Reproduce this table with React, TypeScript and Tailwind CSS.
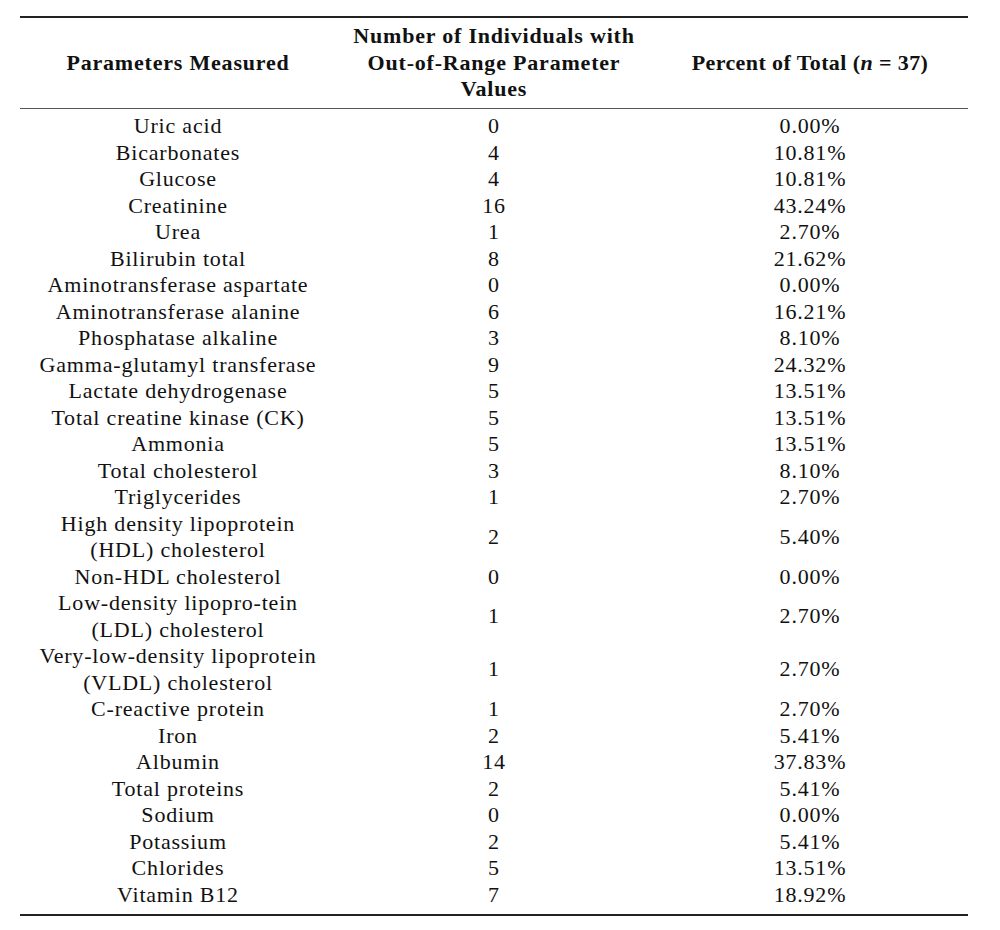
const rows: [string[], string, string][] = [
  [["Uric acid"], "0", "0.00%"],
  [["Bicarbonates"], "4", "10.81%"],
  [["Glucose"], "4", "10.81%"],
  [["Creatinine"], "16", "43.24%"],
  [["Urea"], "1", "2.70%"],
  [["Bilirubin total"], "8", "21.62%"],
  [["Aminotransferase aspartate"], "0", "0.00%"],
  [["Aminotransferase alanine"], "6", "16.21%"],
  [["Phosphatase alkaline"], "3", "8.10%"],
  [["Gamma-glutamyl transferase"], "9", "24.32%"],
  [["Lactate dehydrogenase"], "5", "13.51%"],
  [["Total creatine kinase (CK)"], "5", "13.51%"],
  [["Ammonia"], "5", "13.51%"],
  [["Total cholesterol"], "3", "8.10%"],
  [["Triglycerides"], "1", "2.70%"],
  [["High density lipoprotein", "(HDL) cholesterol"], "2", "5.40%"],
  [["Non-HDL cholesterol"], "0", "0.00%"],
  [["Low-density lipopro-tein", "(LDL) cholesterol"], "1", "2.70%"],
  [["Very-low-density lipoprotein", "(VLDL) cholesterol"], "1", "2.70%"],
  [["C-reactive protein"], "1", "2.70%"],
  [["Iron"], "2", "5.41%"],
  [["Albumin"], "14", "37.83%"],
  [["Total proteins"], "2", "5.41%"],
  [["Sodium"], "0", "0.00%"],
  [["Potassium"], "2", "5.41%"],
  [["Chlorides"], "5", "13.51%"],
  [["Vitamin B12"], "7", "18.92%"],
];

export default function App() {
  return (
    <div
      className="w-[1000px] h-[930px] bg-white pt-[16px] pl-[20px] text-[#111] text-[22px] leading-[26.5px] tracking-[0.8px]"
      style={{ fontFamily: '"Liberation Serif", "Times New Roman", serif' }}
    >
      <div className="w-[948px]">
        <div className="h-[2px] bg-[#222]" />
        <div className="grid grid-cols-3 pt-[5px] pb-[5px] font-bold text-center">
          <div className="flex items-center justify-center">Parameters Measured</div>
          <div>
            Number of Individuals with
            <br />
            Out-of-Range Parameter
            <br />
            Values
          </div>
          <div className="flex items-center justify-center tracking-[0.4px]">
            <span>
              Percent of Total (<i>n</i> = 37)
            </span>
          </div>
        </div>
        <div className="h-[1.5px] bg-[#555]" />
        <div className="pt-[4px] pb-[6px]">
          {rows.map(([name, num, pct], i) => (
            <div key={i} className="grid grid-cols-3 text-center">
              <div>
                {name.map((l, j) => (
                  <div key={j}>{l}</div>
                ))}
              </div>
              <div className="flex items-center justify-center">{num}</div>
              <div className="flex items-center justify-center">{pct}</div>
            </div>
          ))}
        </div>
        <div className="h-[2px] bg-[#222]" />
      </div>
    </div>
  );
}
